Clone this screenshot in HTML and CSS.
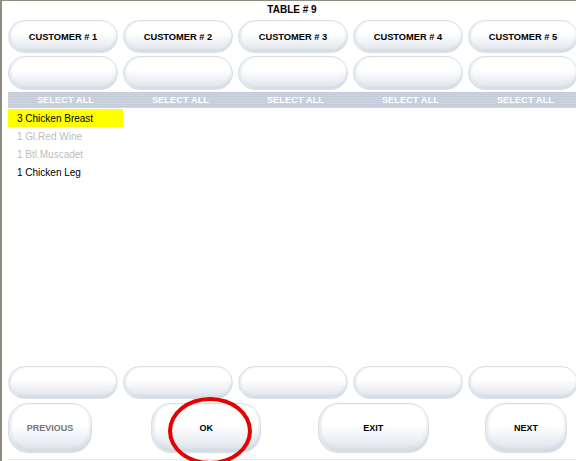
FILE: index.html
```html
<!DOCTYPE html>
<html lang="en">
<head>
    <meta charset="UTF-8">
    <title>Table # 9 - Split Bill</title>
    <link rel="stylesheet" href="styles.css">
</head>
<body>
    <div class="screen">
        <div class="title">TABLE # 9</div>

        <div class="pill-row customers">
            <button class="pill">CUSTOMER # 1</button>
            <button class="pill">CUSTOMER # 2</button>
            <button class="pill">CUSTOMER # 3</button>
            <button class="pill">CUSTOMER # 4</button>
            <button class="pill">CUSTOMER # 5</button>
        </div>
        <div class="pill-row totals">
            <button class="pill"></button>
            <button class="pill"></button>
            <button class="pill"></button>
            <button class="pill"></button>
            <button class="pill"></button>
        </div>

        <div class="select-bar">
            <span>SELECT ALL</span>
            <span>SELECT ALL</span>
            <span>SELECT ALL</span>
            <span>SELECT ALL</span>
            <span>SELECT ALL</span>
        </div>

        <ul class="items">
            <li class="item selected">3 Chicken Breast</li>
            <li class="item disabled">1 Gl.Red Wine</li>
            <li class="item disabled">1 Btl.Muscadet</li>
            <li class="item">1 Chicken Leg</li>
        </ul>

        <div class="pill-row empty-row">
            <button class="pill"></button>
            <button class="pill"></button>
            <button class="pill"></button>
            <button class="pill"></button>
            <button class="pill"></button>
        </div>

        <div class="nav">
            <button class="nav-btn prev">PREVIOUS</button>
            <button class="nav-btn ok">OK<span class="circle"></span></button>
            <button class="nav-btn exit">EXIT</button>
            <button class="nav-btn next">NEXT</button>
        </div>
    </div>
</body>
</html>
```

FILE: styles.css
```css
* {
    margin: 0;
    padding: 0;
    box-sizing: border-box;
}
html, body {
    width: 576px;
    height: 461px;
    overflow: hidden;
}
body {
    font-family: 'Liberation Sans', Arial, sans-serif;
    background: #fff;
    color: #000;
    border-top: 1px solid #8e8e80;
    border-left: 2px solid #8e8e80;
}
.screen {
    display: flex;
    flex-direction: column;
    height: 460px;
    padding-left: 6px;
}
.title {
    height: 18px;
    line-height: 17px;
    text-align: center;
    font-size: 10px;
    font-weight: bold;
    margin-bottom: 1px;
}
.pill-row {
    display: flex;
    gap: 5px;
    width: 575px;
}
.customers {
    height: 33px;
}
.totals {
    height: 34px;
    margin-top: 3px;
}
.pill {
    flex: 0 0 110px;
    border: 1px solid #d9dfe6;
    border-radius: 18px;
    background: linear-gradient(to bottom, #ffffff 0%, #ffffff 40%, #eef1f5 70%, #dde3ea 100%);
    box-shadow: inset 2px 0 2px #e6ebf0, inset 0 -2px 3px #d0d8e0;
    font-family: inherit;
    font-size: 9.3px;
    font-weight: bold;
    color: #000;
}
.select-bar {
    display: flex;
    height: 16px;
    margin-top: 2px;
    background: repeating-linear-gradient(to bottom, #c3ccd8 0px, #c3ccd8 1px, #ccd4de 1px, #ccd4de 2px);
}
.select-bar span {
    flex: 0 0 115px;
    text-align: center;
    line-height: 17px;
    font-size: 9px;
    font-weight: bold;
    letter-spacing: 0.2px;
    color: #fff;
}
.items {
    list-style: none;
    flex: 1;
    padding-top: 1px;
}
.item {
    width: 115px;
    height: 18px;
    line-height: 20px;
    padding-left: 9px;
    font-size: 10px;
    white-space: nowrap;
}
.item.selected {
    background: #ffff00;
}
.item.disabled {
    color: #bdbdbd;
}
.empty-row {
    height: 33px;
    margin-bottom: 4px;
}
.nav {
    display: flex;
    justify-content: space-between;
    padding-right: 9px;
    padding-bottom: 6px;
    border-bottom: 1px solid #f1e7de;
    margin-bottom: 1px;
}
.nav-btn {
    position: relative;
    height: 50px;
    border: 1px solid #d9dfe6;
    border-radius: 20px;
    background: linear-gradient(to bottom, #ffffff 0%, #ffffff 45%, #eef1f5 72%, #dbe2e9 100%);
    box-shadow: inset 2px 0 2px #e6ebf0, inset 0 -3px 4px #cfd7df;
    font-family: inherit;
    font-size: 9px;
    font-weight: bold;
    color: #000;
}
.prev {
    width: 84px;
    color: #777;
}
.ok {
    width: 110px;
    margin-left: 3px;
}
.exit {
    width: 111px;
}
.next {
    width: 82px;
}
.circle {
    position: absolute;
    left: 16px;
    top: -7px;
    width: 84px;
    height: 68px;
    border: 4px solid #e60000;
    border-radius: 50%;
}
```
